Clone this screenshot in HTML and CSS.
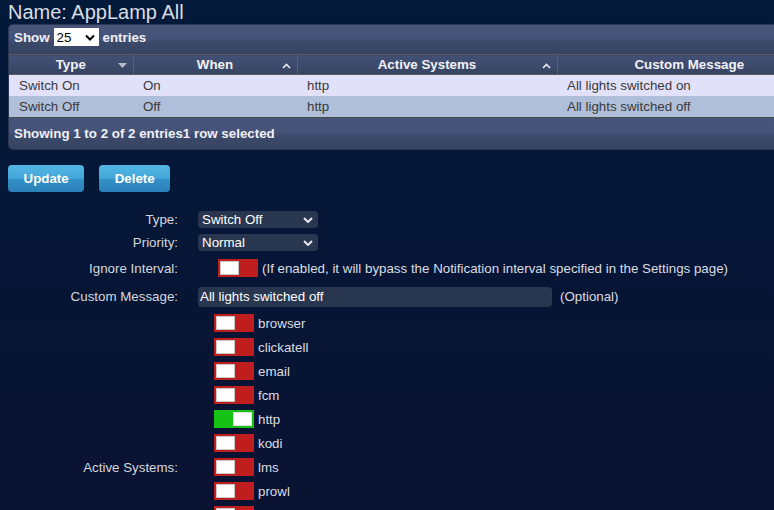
FILE: index.html
```html
<!DOCTYPE html>
<html lang="en">
<head>
    <meta charset="UTF-8">
    <meta name="viewport" content="width=device-width, initial-scale=1.0">
    <title>Notification - AppLamp All</title>
    <link rel="stylesheet" href="styles.css">
</head>
<body>

    <h1 class="page-title">Name: AppLamp All</h1>

    <div class="grid-wrap">
        <div class="grid-toolbar top-bar">
            Show
            <span class="len-select">25
                <svg width="10" height="7" viewBox="0 0 10 7"><path d="M1 1.5 L5 5.5 L9 1.5" fill="none" stroke="#000" stroke-width="2"/></svg>
            </span>
            entries
        </div>
        <table class="grid">
            <colgroup>
                <col style="width:124px">
                <col style="width:164px">
                <col style="width:260px">
                <col style="width:264px">
            </colgroup>
            <thead>
                <tr>
                    <th>Type <svg class="sort-icon" width="9" height="5" viewBox="0 0 9 5"><path d="M0 0 L9 0 L4.5 5 Z" fill="#b8bccb"/></svg></th>
                    <th>When <svg class="sort-icon" width="9" height="6" viewBox="0 0 9 6"><path d="M1 5 L4.5 1.5 L8 5" fill="none" stroke="#e8e8f0" stroke-width="1.6"/></svg></th>
                    <th>Active Systems <svg class="sort-icon" width="9" height="6" viewBox="0 0 9 6"><path d="M1 5 L4.5 1.5 L8 5" fill="none" stroke="#e8e8f0" stroke-width="1.6"/></svg></th>
                    <th>Custom Message</th>
                </tr>
            </thead>
            <tbody>
                <tr class="odd">
                    <td>Switch On</td>
                    <td>On</td>
                    <td>http</td>
                    <td>All lights switched on</td>
                </tr>
                <tr class="even selected">
                    <td>Switch Off</td>
                    <td>Off</td>
                    <td>http</td>
                    <td>All lights switched off</td>
                </tr>
            </tbody>
        </table>
        <div class="grid-toolbar bottom-bar">Showing 1 to 2 of 2 entries1 row selected</div>
    </div>

    <div class="actions">
        <button type="button" class="btn">Update</button>
        <button type="button" class="btn">Delete</button>
    </div>

    <div class="notify-form">
        <div class="form-row row-select">
            <div class="lbl">Type:</div>
            <div class="val">
                <span class="dd">Switch Off
                    <svg width="10" height="6" viewBox="0 0 10 6"><path d="M1 1 L5 5 L9 1" fill="none" stroke="#e6e8ee" stroke-width="2"/></svg>
                </span>
            </div>
        </div>
        <div class="form-row row-select">
            <div class="lbl">Priority:</div>
            <div class="val">
                <span class="dd">Normal
                    <svg width="10" height="6" viewBox="0 0 10 6"><path d="M1 1 L5 5 L9 1" fill="none" stroke="#e6e8ee" stroke-width="2"/></svg>
                </span>
            </div>
        </div>
        <div class="form-row row-tall">
            <div class="lbl">Ignore Interval:</div>
            <div class="val">
                <span class="switch interval-switch"><span class="knob"></span></span>
                <span class="hint">(If enabled, it will bypass the Notification interval specified in the Settings page)</span>
            </div>
        </div>
        <div class="form-row row-msg">
            <div class="lbl">Custom Message:</div>
            <div class="val">
                <span class="text-input">All lights switched off</span>
                <span class="hint opt">(Optional)</span>
            </div>
        </div>
        <div class="form-row">
            <div class="lbl">Active Systems:</div>
            <div class="val">
                <ul class="systems">
                    <li><span class="switch"><span class="knob"></span></span>browser</li>
                    <li><span class="switch"><span class="knob"></span></span>clickatell</li>
                    <li><span class="switch"><span class="knob"></span></span>email</li>
                    <li><span class="switch"><span class="knob"></span></span>fcm</li>
                    <li><span class="switch on"><span class="knob"></span></span>http</li>
                    <li><span class="switch"><span class="knob"></span></span>kodi</li>
                    <li><span class="switch"><span class="knob"></span></span>lms</li>
                    <li><span class="switch"><span class="knob"></span></span>prowl</li>
                    <li><span class="switch"><span class="knob"></span></span>pushbullet</li>
                    <li><span class="switch"><span class="knob"></span></span>pushover</li>
                    <li><span class="switch"><span class="knob"></span></span>pushsafer</li>
                    <li><span class="switch"><span class="knob"></span></span>telegram</li>
                    <li><span class="switch"><span class="knob"></span></span>twitter</li>
                </ul>
            </div>
        </div>
    </div>

</body>
</html>
```

FILE: styles.css
```css
html {
    background: linear-gradient(to bottom, #031a3a 0px, #0a1232 510px, #0c0e2e 100%);
    min-height: 100%;
}

body {
    margin: 0;
    padding: 0 8px 20px 8px;
    font-family: 'Liberation Sans', Arial, sans-serif;
    font-size: 13.33px;
    color: #dcdde3;
    overflow-x: hidden;
}

.page-title {
    margin: 0;
    font-size: 20px;
    line-height: 24px;
    font-weight: normal;
    color: #dadce2;
}

/* data table */
.grid-wrap {
    width: 812px;
    background: linear-gradient(to bottom, #46547a 0%, #3c4a6d 50%, #34425f 100%);
    border: 1px solid #2b3752;
    border-radius: 5px;
    overflow: hidden;
}

.grid-toolbar {
    font-weight: bold;
    color: #f0f0f5;
    padding: 0 5px;
    display: flex;
    align-items: center;
    background: linear-gradient(to bottom, #475579 0%, #45537a 45%, #3b496b 60%, #37445f 100%);
}

.top-bar {
    height: 29px;
    padding-bottom: 5px;
    box-sizing: border-box;
}

.bottom-bar {
    height: 31px;
    border-top: 1px solid #4b4b4b;
}

.len-select {
    display: inline-flex;
    align-items: center;
    justify-content: space-between;
    width: 45px;
    height: 18px;
    margin: 0 4px 0 4px;
    padding: 0 4px 0 3px;
    background: #fff;
    color: #000;
    font-weight: normal;
    box-sizing: border-box;
}

.grid {
    width: 812px;
    border-collapse: collapse;
    table-layout: fixed;
}

.grid th {
    height: 19px;
    padding: 0;
    position: relative;
    font-weight: bold;
    color: #f2f2f6;
    text-align: center;
    background: linear-gradient(to bottom, #425075 0%, #3d4b6e 50%, #36435f 100%);
    border-top: 1px solid #5a5a5a;
    border-bottom: 1px solid #5a5a5a;
    border-left: 1px solid #606060;
}

.grid th:first-child {
    border-left: none;
}

.sort-icon {
    position: absolute;
    right: 6px;
    top: 8px;
}

.grid td {
    height: 21px;
    padding: 0 0 0 10px;
    color: #3a3a3a;
    white-space: nowrap;
}

.grid tr.odd td {
    background: #e1e1fa;
}

.grid tr.even td {
    background: #b0bfd9;
}

/* buttons */
.actions {
    display: flex;
    gap: 15px;
    margin: 15px 0 16px 0;
}

.btn {
    height: 27px;
    padding: 0 15.5px;
    border: none;
    border-radius: 4px;
    font-family: inherit;
    font-size: 13.33px;
    font-weight: bold;
    color: #fff;
    background: linear-gradient(to bottom, #52b6e4 0%, #43a6d8 50%, #3390c8 52%, #2b80b8 100%);
}

/* form */
.notify-form {
    display: flex;
    flex-direction: column;
}

.form-row {
    display: grid;
    grid-template-columns: 170px 1fr;
    column-gap: 20px;
    align-items: center;
}

.row-select {
    height: 23px;
}

.row-tall {
    height: 28px;
}

.row-msg {
    height: 29px;
}

.lbl {
    text-align: right;
    color: #d6d8de;
}

.val {
    display: flex;
    align-items: center;
}

.dd {
    display: inline-flex;
    align-items: center;
    justify-content: space-between;
    width: 120px;
    height: 17px;
    padding: 0 5px 0 4px;
    box-sizing: border-box;
    background: #29364f;
    border-radius: 4px;
    color: #fff;
}

.switch {
    position: relative;
    display: inline-block;
    width: 40px;
    height: 18px;
    background: #c01e1e;
    flex-shrink: 0;
}

.switch .knob {
    position: absolute;
    left: 2px;
    top: 2px;
    width: 17px;
    height: 12px;
    background: #fff;
    border: 1px solid #c8c8c8;
}

.switch.on {
    background: linear-gradient(to right, #16c216 0%, #16c216 45%, #12b012 52%, #16c216 60%);
}

.switch.on .knob {
    left: auto;
    right: 2px;
    border-color: #e0e0e0;
}

.interval-switch {
    margin-left: 20px;
}

.hint {
    margin-left: 4px;
    color: #dcdde3;
}

.text-input {
    display: inline-block;
    width: 354px;
    height: 20px;
    line-height: 20px;
    padding-left: 2px;
    box-sizing: border-box;
    background: #29364f;
    border-radius: 4px;
    color: #fff;
}

.hint.opt {
    margin-left: 8px;
}

.systems {
    list-style-type: none;
    margin: 0;
    padding: 0 0 0 16px;
}

.systems li {
    display: flex;
    align-items: center;
    height: 24px;
}

.systems li .switch {
    margin-right: 4px;
}
```
